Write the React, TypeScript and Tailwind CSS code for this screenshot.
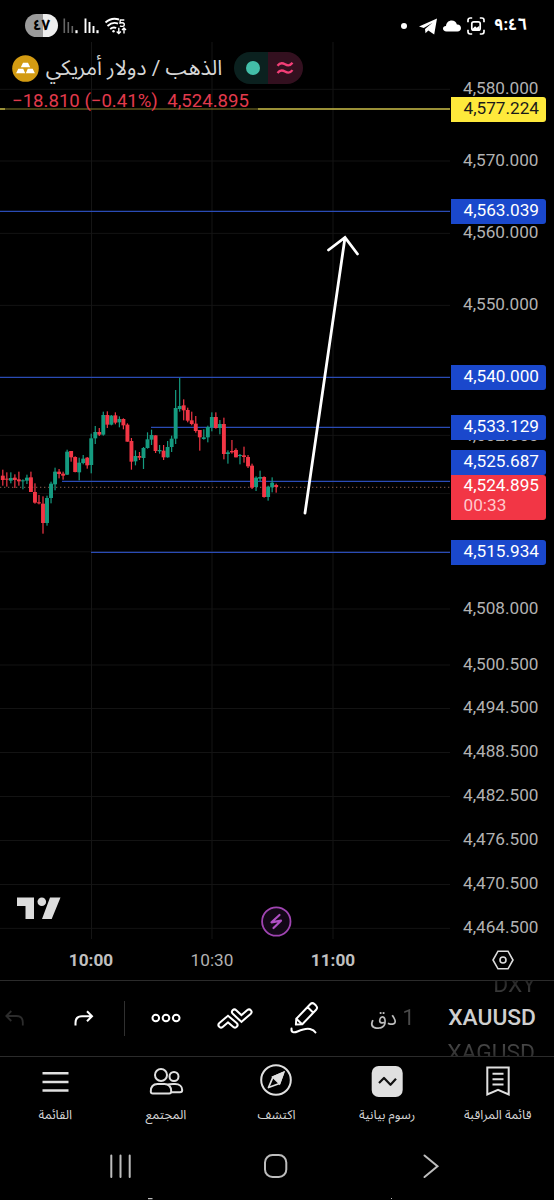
import type { ReactNode } from "react"

// [body top, body bottom, high, low, is up] in thirds of a pixel below CANDLE_TOP
const candles: [number, number, number, number, 0 | 1][] = [
  [317, 330, 299, 347, 0], [326, 329, 307, 350, 0], [324, 332, 307, 340, 1], [323, 330, 313, 354, 0],
  [328, 334, 305, 347, 0], [331, 334, 328, 358, 1], [323, 332, 314, 342, 1], [322, 366, 305, 366, 0],
  [366, 398, 340, 401, 0], [397, 400, 375, 403, 0], [401, 459, 379, 491, 0], [384, 459, 377, 467, 1],
  [341, 384, 335, 400, 1], [305, 343, 293, 361, 1], [305, 312, 297, 325, 0], [311, 317, 305, 329, 0],
  [245, 314, 239, 315, 1], [243, 262, 243, 275, 0], [261, 306, 259, 307, 0], [278, 307, 263, 331, 1],
  [266, 279, 255, 283, 1], [263, 286, 261, 296, 0], [205, 285, 191, 310, 1], [186, 205, 168, 222, 1],
  [186, 194, 174, 198, 0], [135, 194, 125, 197, 1], [135, 164, 124, 174, 0], [137, 164, 135, 166, 1],
  [136, 158, 127, 163, 0], [147, 157, 139, 172, 1], [147, 166, 145, 178, 0], [164, 215, 160, 215, 0],
  [213, 275, 204, 299, 0], [258, 274, 241, 286, 1], [258, 263, 246, 270, 0], [234, 264, 231, 297, 1],
  [208, 234, 187, 236, 1], [195, 209, 179, 225, 1], [196, 243, 196, 249, 0], [240, 244, 225, 251, 1],
  [242, 262, 225, 270, 0], [231, 262, 213, 263, 1], [206, 231, 197, 246, 1], [114, 206, 60, 222, 1],
  [108, 117, 24, 125, 1], [106, 121, 88, 151, 0], [120, 152, 113, 157, 0], [151, 162, 125, 166, 0],
  [161, 183, 138, 188, 0], [180, 202, 180, 242, 0], [202, 207, 178, 209, 1], [171, 202, 167, 217, 1],
  [141, 172, 127, 184, 1], [141, 174, 127, 176, 0], [162, 174, 150, 193, 1], [162, 252, 143, 268, 0],
  [247, 252, 241, 281, 1], [243, 247, 210, 251, 0], [240, 262, 235, 262, 0], [255, 258, 252, 283, 1],
  [256, 261, 230, 278, 0], [261, 289, 255, 294, 0], [287, 353, 281, 357, 0], [323, 351, 319, 363, 1],
  [321, 326, 302, 334, 1], [321, 381, 319, 383, 0], [350, 381, 347, 392, 1], [338, 352, 322, 367, 1],
  [345, 351, 341, 368, 0],
]

const CHART_TOP = 42
const CANDLE_TOP = 370

const gridY = [89.3, 161, 233.4, 305.4, 435.4, 493.6, 551.8, 609, 665, 708.5, 752.5, 796.5, 840.5, 884.5, 928.4]
const gridX = [91.5, 212, 333]

const scale = [
  { y: 88, text: "4,580.000" },
  { y: 160, text: "4,570.000" },
  { y: 232, text: "4,560.000" },
  { y: 304, text: "4,550.000" },
  { y: 435, text: "4,532.000" },
  { y: 608, text: "4,508.000" },
  { y: 664, text: "4,500.500" },
  { y: 707, text: "4,494.500" },
  { y: 751, text: "4,488.500" },
  { y: 795, text: "4,482.500" },
  { y: 839, text: "4,476.500" },
  { y: 883, text: "4,470.500" },
  { y: 927, text: "4,464.500" },
]

const tags = [
  { y: 97, text: "4,577.224", color: "bg-[#fee93b] text-[#1a1a1a]" },
  { y: 199, text: "4,563.039", color: "bg-[#1a48cc] text-white" },
  { y: 365, text: "4,540.000", color: "bg-[#1a48cc] text-white" },
  { y: 415, text: "4,533.129", color: "bg-[#1a48cc] text-white" },
  { y: 450, text: "4,525.687", color: "bg-[#1a48cc] text-white" },
  { y: 540, text: "4,515.934", color: "bg-[#1a48cc] text-white" },
]

function StatusBar() {
  return (
    <header className="flex h-[42px] shrink-0 items-start pt-[14px] pr-[27px] pl-[25px] text-white">
      <div className="flex h-[23px] w-[33px] items-center justify-center rounded-full bg-[linear-gradient(90deg,#9b9b9b_54%,#eeeeee_54%)] text-[15px] font-bold text-black">
        ٤٧
      </div>
      <svg className="ml-[5px] h-[23px] w-[64px]" viewBox="0 0 64 23" fill="none" stroke="#fff" strokeWidth="1.6">
        <path d="M1.3 4.500v14.500M5.300 8v11M9.300 12v7" stroke="#666" />
        <path d="M13.500 16.200v3" strokeWidth="2.200" />
        <path d="M22.500 4.500v14.500M26.500 8v11M30.500 12v7" strokeWidth="1.900" />
        <path d="M34.500 16.200v3" strokeWidth="2.200" />
        <path d="M42.500 8.500c4-3.600 9-4.500 13.500-3M44.500 12c3.400-3 7.400-3.700 10.500-2.300M47.200 15c1.900-1.600 4-1.900 6-1" strokeWidth="1.900" />
        <circle cx="50.500" cy="17.300" r="1.200" fill="#fff" stroke="none" />
        <path d="M61.300 6h-4l-.3 3c3-.8 4.500.2 4.300 1.800-.2 1.800-2.700 2-4.300 1" strokeWidth="1.400" />
        <path d="M55.800 13.800v5.500M53.700 17.500l2.100 2 2.100-2M61 19.500V14M59 16l2-2 2 2" strokeWidth="1.400" />
      </svg>
      <span className="mt-[9px] ml-auto size-[6px] rounded-full bg-white" />
      <svg className="mt-[4px] ml-[12px] h-[17px] w-[18px]" viewBox="0 0 18 17" fill="#fff">
        <path d="M0 8.600 18 .5 15.200 16.500 9.300 12.500 6.500 15.200 6 10.900 13.500 4.800 4.800 10Z" />
      </svg>
      <svg className="mt-[6px] ml-[6px] h-[12px] w-[18px]" viewBox="0 0 18 12" fill="#fff">
        <path d="M3.500 11.500C1.300 11.500 0 10.200 0 8.600 0 6.900 1.400 5.900 3 6 3.300 2.600 5.700.5 8.700.5c2.600 0 4.500 1.500 5.200 4C16.400 4.300 18 5.900 18 8c0 2-1.500 3.500-3.500 3.500Z" />
      </svg>
      <svg className="mt-[3px] ml-[6px] size-[18px]" viewBox="0 0 18 18" fill="none" stroke="#fff" strokeWidth="1.700">
        <path d="M1 5.200V3.200C1 2 2 1 3.200 1h2M12.800 1h2C16 1 17 2 17 3.200v2M17 12.800v2c0 1.200-1 2.200-2.200 2.200h-2M5.200 17h-2C2 17 1 16 1 14.800v-2" />
        <rect x="4.800" y="4.800" width="8.400" height="8.400" rx="2" />
        <path d="m5.500 11.800 2.600-2.600 1.600 1.500 2.700-2v4.200H5.500Z" fill="#fff" stroke="none" />
      </svg>
      <span dir="ltr" className="ml-[9px] w-[33px] text-[16.500px] leading-[22px] font-bold whitespace-nowrap">
        ٩:٤٦
      </span>
    </header>
  )
}

function Chart() {
  return (
    <svg className="absolute inset-0" width="450" height="897" viewBox={`0 ${CHART_TOP} 450 897`} fill="none">
      {gridY.map((y) => (
        <path key={y} d={`M0 ${y}H450`} stroke="#131313" />
      ))}
      {gridX.map((x) => (
        <path key={x} d={`M${x} 42V939`} stroke="#151515" />
      ))}

      {/* Horizontal levels */}
      <path d="M0 109H5M258 109H450" stroke="#cdc04a" strokeWidth="1.300" />
      <path d="M5 109H258" stroke="#857c2b" strokeWidth="1" />
      <path d="M0 211.300H450M0 377.300H450M151 427.300H450M62 481.400H450M91 552.300H450" stroke="#2a4bb5" strokeWidth="1.300" />
      <path d="M0 487.300H450" stroke="#8d6050" strokeDasharray="1.300 2.700" />

      {candles.map(([top, bottom, high, low, up], i) => {
        const x = 2.800 + i * 4.020
        const color = up ? "#159b80" : "#f23645"
        return (
          <g key={i} fill={color}>
            <rect x={x - 0.6} y={CANDLE_TOP + high / 3} width="1.200" height={(low - high) / 3} />
            <rect x={x - 1.950} y={CANDLE_TOP + top / 3} width="3.900" height={(bottom - top) / 3} />
          </g>
        )
      })}

      {/* Arrow */}
      <path d="M305 513 345 237.500M328.500 250 345 237.500 357.500 254" stroke="#fff" strokeWidth="2.800" strokeLinecap="round" />

      {/* Logo */}
      <path d="M17 897.500H34V919H25.500V906H17ZM50 897.500H60.500L51.700 919H42Z" fill="#dcdcdc" />
      <circle cx="41.800" cy="901.800" r="4.300" fill="#dcdcdc" />

      {/* Event marker */}
      <circle cx="276.300" cy="921.500" r="14.200" fill="#120716" stroke="#a045b2" strokeWidth="1.800" />
      <path d="M279.500 915 271.500 922.300 281 920.700 273.500 928" stroke="#b04fc4" strokeWidth="2.200" strokeLinejoin="round" strokeLinecap="round" />
    </svg>
  )
}

function Legend() {
  return (
    <div className="relative pt-[10px] pl-[12px]">
      <div className="flex h-[32px] items-center">
        <svg className="size-[27px]" viewBox="0 0 27 27">
          <circle cx="13.500" cy="13.500" r="13.300" fill="#d39b12" />
          <path d="M11 7.700h5l2.200 4.600H8.800ZM6.300 13.700h4.900l2 4.500H4.100ZM15.800 13.700h4.900l2.200 4.500h-9.100Z" fill="#fff" />
        </svg>
        <h1 dir="rtl" className="ml-[6px] w-[178px] pt-px text-center text-[21px] whitespace-nowrap text-[#d6d6d6]">
          الذهب / دولار أمريكي
        </h1>
        <div className="ml-[11px] flex h-[32px] w-[69px] overflow-hidden rounded-full">
          <span className="flex w-[34px] items-center justify-center bg-[#0b211f] pl-[3px]">
            <span className="size-[14px] rounded-full bg-[#43bfa9]" />
          </span>
          <span className="flex flex-1 items-center justify-center bg-[#33101f]">
            <svg className="mr-[2px] h-[14px] w-[18px]" viewBox="0 0 18 14" fill="none" stroke="#f23f77" strokeWidth="2.300">
              <path d="M1.500 4.700C4 1.500 6.500 1.800 9 3.300s5 1.800 7.500-1.500M1.500 12C4 8.800 6.500 9.100 9 10.600s5 1.800 7.500-1.500" />
            </svg>
          </span>
        </div>
      </div>
      <p className="mt-[6px] text-[18.600px] leading-[22px] whitespace-pre text-[#e23a4c]">
        −18.810 (−0.41%)<span className="ml-[9.500px]">4,524.895</span>
      </p>
    </div>
  )
}

function PriceScale() {
  return (
    <>
      {scale.map(({ y, text }) => (
        <span
          key={text}
          className="absolute left-[463px] text-[17.200px] leading-[20px] text-[#b2b2b2]"
          style={{ top: y - CHART_TOP - 10 }}
        >
          {text}
        </span>
      ))}
      {tags.map(({ y, text, color }) => (
        <span
          key={text}
          className={`absolute left-[451px] h-[25px] w-[95px] rounded-r-[3px] pl-[12.500px] text-[17.200px] leading-[22px] ${color}`}
          style={{ top: y - CHART_TOP }}
        >
          {text}
        </span>
      ))}
      <div className="absolute top-[433px] left-[451px] h-[45px] w-[95px] rounded-r-[3px] bg-[#f23645] pl-[12.500px] text-[17.200px] leading-[20px] text-white">
        <div>4,524.895</div>
        <div className="text-[#ffc9cd]">00:33</div>
      </div>
    </>
  )
}

function TimeAxis() {
  return (
    <div className="flex h-[41px] shrink-0 items-center pt-[2px] text-[17.200px] text-[#c0c0c0]">
      <span className="ml-[61px] w-[60px] text-center font-bold">10:00</span>
      <span className="ml-[61px] w-[60px] text-center text-[#b2b2b2]">10:30</span>
      <span className="ml-[61px] w-[60px] text-center font-bold">11:00</span>
      <svg className="mb-[2px] ml-[128.500px] h-[20px] w-[22px]" viewBox="0 0 22 20" fill="none" stroke="#dcdcdc" strokeWidth="1.600">
        <path d="M6 1.200H16L21 10 16 18.800H6L1 10Z" />
        <circle cx="11" cy="10" r="3" />
      </svg>
    </div>
  )
}

function Toolbar() {
  return (
    <div className="flex h-[76px] shrink-0 items-center border-t border-[#2b2b2b] pb-px">
      <svg className="ml-[5px] h-[16px] w-[19px]" viewBox="0 0 19 16" fill="none" stroke="#2c2c2c" strokeWidth="1.800">
        <path d="M17.800 15.500V12.500C17.800 8.500 15.500 6 11.500 6H1.500M6.300 1 1.300 6l5 5" />
      </svg>
      <svg className="ml-[50px] h-[16px] w-[20px]" viewBox="0 0 20 16" fill="none" stroke="#fff" strokeWidth="2">
        <path d="M1.500 15.500V13C1.500 8.500 4 6.200 8 6.200H18M13 1.200l5 5-5 5" />
      </svg>
      <span className="ml-[30px] h-[35px] w-px bg-[#303030]" />
      <svg className="ml-[25.500px] h-[10px] w-[30px]" viewBox="0 0 30 10" fill="none" stroke="#fff" strokeWidth="2">
        <circle cx="4.800" cy="5" r="3.300" />
        <circle cx="15" cy="5" r="3.300" />
        <circle cx="25.200" cy="5" r="3.300" />
      </svg>
      <svg className="ml-[36.500px] h-[21px] w-[36px]" viewBox="0 0 36 21" fill="none" strokeLinecap="round">
        <path d="m4 17 7-6 7 6" stroke="#fff" strokeWidth="7" />
        <path d="m4 17 7-6 7 6" stroke="#000" strokeWidth="3" />
        <path d="m17.500 4 7 6.500L32 4" stroke="#fff" strokeWidth="7" />
        <path d="m17.500 4 7 6.500L32 4" stroke="#000" strokeWidth="3" />
      </svg>
      <svg className="ml-[36.500px] h-[34px] w-[30px]" viewBox="0 0 30 34" fill="none" stroke="#fff" strokeWidth="2" strokeLinejoin="round" strokeLinecap="round">
        <path d="M6.300 17.800 20.200 3.200c1.200-1.200 3-1.200 4.200-.1l1.600 1.500c1.200 1.200 1.200 3 .1 4.200L12.300 23.300l-6.400.3ZM17.500 6l5.800 5.700M6.300 17.800l5.800 5.500" />
        <path d="M1.500 27.500C1 31.500 4 32 7.500 30.500c5-2.200 9-3.500 12.500-2.500 3 .8 4.600 2 5.500 3.500" />
      </svg>
      <div dir="rtl" className="ml-[43px] w-[52px] bg-[linear-gradient(90deg,#bdbdbd_62%,#4a4a4a_82%)] bg-clip-text text-[21.500px] whitespace-nowrap text-transparent">
        1 دق
      </div>
      <div className="mr-[18px] ml-auto flex h-[75px] w-[92px] flex-col items-end justify-center overflow-hidden text-[22.800px]">
        <div className="h-[33px] bg-linear-to-b from-[#101010] to-[#4a4a4a] bg-clip-text leading-[33px] text-transparent">DXY</div>
        <div className="h-[34px] leading-[34px] font-medium text-[#cfcfcf]">XAUUSD</div>
        <div className="h-[33px] bg-linear-to-b from-[#5c5c5c] to-[#181818] bg-clip-text pr-px leading-[35px] text-transparent">XAGUSD</div>
      </div>
    </div>
  )
}

function Tab({ label, children }: { label: string; children: ReactNode }) {
  return (
    <button className="flex w-[110.600px] flex-col items-center">
      <svg className="h-[34px] w-[36px]" viewBox="0 0 36 34" fill="none" stroke="#e0e0e0" strokeWidth="2">
        {children}
      </svg>
      <span dir="rtl" className="mt-[9px] text-[12.800px] leading-[18px] whitespace-nowrap text-[#d4d4d4]">
        {label}
      </span>
    </button>
  )
}

function TabBar() {
  return (
    <nav className="flex h-[79px] shrink-0 border-t border-[#2b2b2b] pt-[6px]">
      <Tab label="القائمة">
        <path d="M5.500 10.200H31.500M5.500 19H31.500M5.500 27.500H31.500" strokeWidth="2.600" />
      </Tab>
      <Tab label="المجتمع">
        <circle cx="13" cy="12" r="6" />
        <circle cx="26" cy="13.500" r="4.500" />
        <path d="M2.800 28.500C2.800 23.500 5 21 9.500 21h7c4.500 0 6.700 2.500 6.700 7.500 0 1.300-.7 2-2 2H4.800c-1.300 0-2-.7-2-2ZM20 21.500c1-.4 2.500-.5 5-.5h2c4.500 0 7.200 2.500 7.200 6 0 1.500-.7 2.200-2.200 2.200h-9" />
      </Tab>
      <Tab label="اكتشف">
        <circle cx="18" cy="17" r="14.800" />
        <path d="M25.500 9.500 21.500 20.500 15 14Z" fill="#e0e0e0" />
        <path d="M25.500 9.500 21.500 20.500 10.500 24.500 15 14Z" strokeWidth="1.800" strokeLinejoin="round" />
      </Tab>
      <Tab label="رسوم بيانية">
        <rect x="2.700" y="3" width="31" height="31" rx="7" fill="#e0e0e0" stroke="none" />
        <path d="m10 20 5-5 6.500 6.800 5.500-6" stroke="#111" strokeWidth="2.200" strokeLinejoin="round" />
      </Tab>
      <Tab label="قائمة المراقبة">
        <path d="M7.300 4.500H28.700V31.500L18 26.800 7.300 31.500ZM12.500 10.700H23.500M12.500 16.200H23.500M12.500 21.500H23.500" />
      </Tab>
    </nav>
  )
}

function SystemNav() {
  return (
    <div className="h-[65px] shrink-0">
      <svg className="h-[65px] w-[554px]" viewBox="0 0 554 65" fill="none" stroke="#bdbdbd" strokeWidth="2">
        <path d="M111.300 20.500V42M120.500 20.500V42M129.700 20.500V42" strokeLinecap="round" />
        <rect x="265" y="20" width="21.300" height="22" rx="7.500" />
        <path d="m424.500 20.500 13 10.700-13 10.800" strokeLinecap="round" />
        <path d="M148 63.700h4.500M391 63.500h1" strokeWidth="1.200" />
      </svg>
    </div>
  )
}

export default function App() {
  return (
    <div className="flex h-[1200px] w-[554px] flex-col overflow-hidden bg-black font-[Roboto,'Noto_Sans_Arabic','Noto_Sans','DejaVu_Sans',sans-serif]">
      <StatusBar />
      <main className="relative h-[897px] shrink-0">
        <Chart />
        <Legend />
        <PriceScale />
      </main>
      <TimeAxis />
      <Toolbar />
      <TabBar />
      <SystemNav />
    </div>
  )
}
